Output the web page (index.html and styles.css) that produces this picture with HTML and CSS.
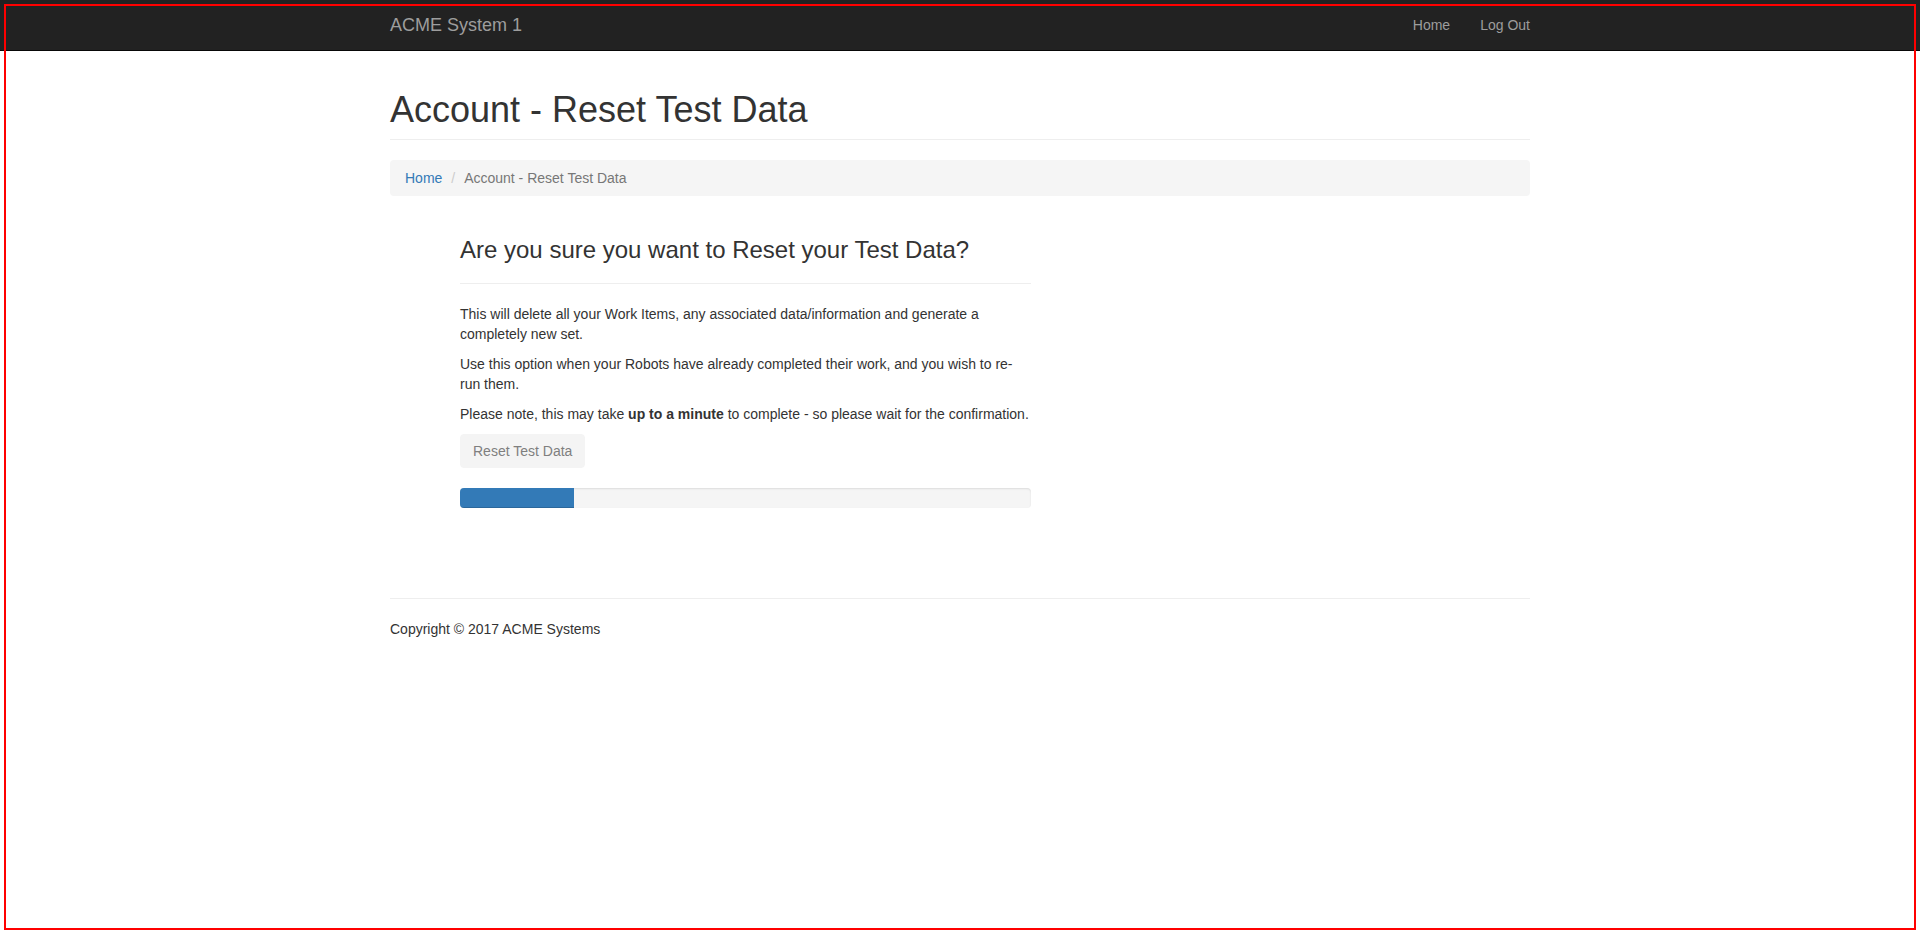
FILE: index.html
```html
<!DOCTYPE html>
<html lang="en">
<head>
<meta charset="utf-8">
<title>Account - Reset Test Data</title>
<link rel="stylesheet" href="styles.css">
</head>
<body>
<div class="frame"></div>
<nav class="navbar">
  <div class="container nav-inner">
    <a class="brand" href="#">ACME System 1</a>
    <ul class="nav">
      <li><a href="#">Home</a></li>
      <li><a href="#">Log Out</a></li>
    </ul>
  </div>
</nav>
<div class="container">
  <h1 class="page-title">Account - Reset Test Data</h1>
  <ol class="breadcrumb">
    <li><a href="#">Home</a></li>
    <li class="active">Account - Reset Test Data</li>
  </ol>
  <div class="panel">
    <h3 class="panel-title">Are you sure you want to Reset your Test Data?</h3>
    <hr class="rule">
    <p>This will delete all your Work Items, any associated data/information and generate a completely new set.</p>
    <p>Use this option when your Robots have already completed their work, and you wish to re-run them.</p>
    <p>Please note, this may take <strong>up to a minute</strong> to complete - so please wait for the confirmation.</p>
    <button class="btn" type="button">Reset Test Data</button>
    <div class="progress"><div class="progress-bar" style="width: 20%"></div></div>
  </div>
  <hr class="footer-rule">
  <footer class="footer">
    <p>Copyright © 2017 ACME Systems</p>
  </footer>
</div>
</body>
</html>
```

FILE: styles.css
```css
html, body {
  margin: 0;
  padding: 0;
}
body {
  font-family: "Liberation Sans", Arial, Helvetica, sans-serif;
  font-size: 14px;
  line-height: 20px;
  color: #333;
  background: #fff;
}
a {
  color: #337ab7;
  text-decoration: none;
}
.frame {
  position: fixed;
  left: 4px;
  top: 4px;
  width: 1908px;
  height: 922px;
  border: 2px solid #ff0000;
  pointer-events: none;
  z-index: 100;
}
.container {
  width: 1140px;
  margin: 0 auto;
}
.navbar {
  background: #222;
  border-bottom: 1px solid #080808;
  height: 50px;
}
.nav-inner {
  display: flex;
  justify-content: space-between;
  align-items: stretch;
  height: 50px;
}
.brand {
  margin-left: -15px;
  padding: 15px;
  font-size: 18px;
  line-height: 20px;
  color: #9d9d9d;
}
.nav {
  display: flex;
  list-style: none;
  margin: 0 -15px 0 0;
  padding: 0;
}
.nav a {
  display: block;
  padding: 15px;
  line-height: 20px;
  color: #9d9d9d;
}
.page-title {
  margin: 39px 0 0;
  padding-bottom: 9px;
  border-bottom: 1px solid #eee;
  font-size: 36px;
  line-height: 39.6px;
  font-weight: 500;
}
.breadcrumb {
  display: flex;
  list-style: none;
  margin: 20px 0 0;
  padding: 8px 15px;
  background: #f5f5f5;
  border-radius: 4px;
}
.breadcrumb li + li {
  margin-left: 4px;
}
.breadcrumb li + li::before {
  content: "/\00a0";
  padding: 0 5px;
  color: #ccc;
}
.breadcrumb .active {
  color: #777;
}
.panel {
  margin: 41px 0 0 70px;
  width: 571px;
}
.panel-title {
  margin: 0;
  font-size: 24px;
  line-height: 26.4px;
  font-weight: 500;
}
.rule {
  margin: 20px 0;
  border: 0;
  border-top: 1px solid #eee;
  height: 0;
}
.panel p {
  margin: 0 0 10px;
}
.btn {
  display: block;
  margin: 0 0 20px;
  padding: 6px 12px;
  font-family: inherit;
  font-size: 14px;
  line-height: 20px;
  color: #7f7f7f;
  background: #f4f4f4;
  border: 1px solid #f4f4f4;
  border-radius: 4px;
}
.progress {
  height: 20px;
  background: #f5f5f5;
  border-radius: 4px;
  overflow: hidden;
  box-shadow: inset 0 1px 2px rgba(0, 0, 0, 0.1);
}
.progress-bar {
  height: 100%;
  background: #337ab7;
  box-shadow: inset 0 -1px 0 rgba(0, 0, 0, 0.15);
}
.footer-rule {
  margin: 90px 0 20px;
  border: 0;
  border-top: 1px solid #eee;
  height: 0;
}
.footer p {
  margin: 0 0 10px;
}
```
